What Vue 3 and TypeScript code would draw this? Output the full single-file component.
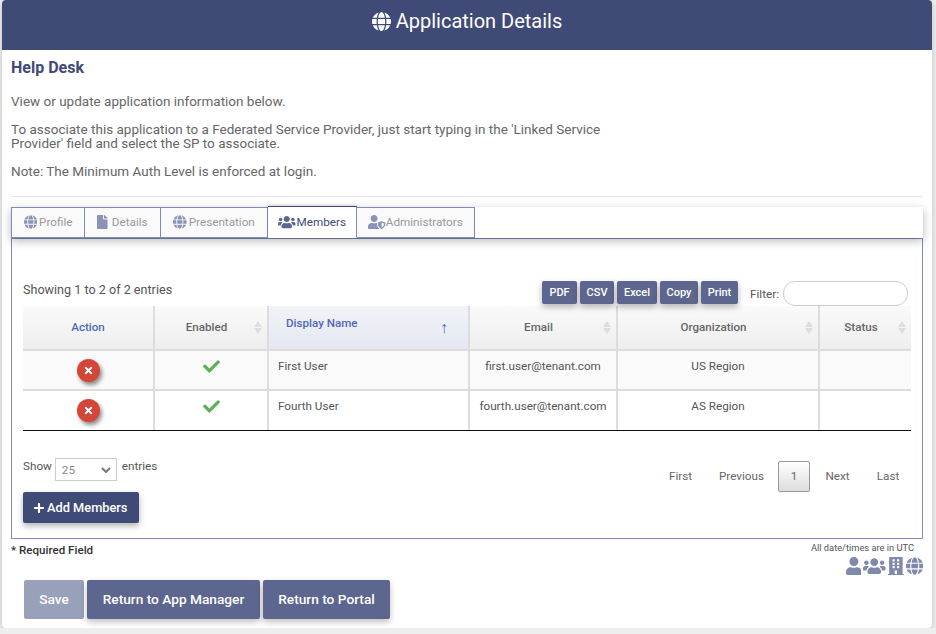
<script setup lang="ts">
interface Glyph {
  box: string
  d: string
}

const icons: Record<string, Glyph> = {
  globe: { box: '0 0 496 512', d: 'M336.5 160C322 70.7 287.8 8 248 8s-74 62.7-88.5 152h177zM152 256c0 22.2 1.2 43.5 3.3 64h185.3c2.1-20.5 3.3-41.8 3.3-64s-1.2-43.5-3.3-64H155.3c-2.1 20.5-3.3 41.8-3.3 64zm324.7-96c-28.6-67.9-86.5-120.4-158-141.6 24.4 33.8 41.2 84.7 50 141.6h108zM177.2 18.4C105.8 39.6 47.8 92.1 19.3 160h108c8.7-56.9 25.5-107.8 49.9-141.6zM487.4 192H372.7c2.1 21 3.3 42.5 3.3 64s-1.2 43-3.3 64h114.6c5.5-20.5 8.6-41.8 8.6-64s-3.1-43.5-8.5-64zM120 256c0-21.5 1.2-43 3.3-64H8.6C3.2 212.5 0 233.8 0 256s3.2 43.5 8.6 64h114.6c-2-21-3.2-42.5-3.2-64zm39.5 96c14.5 89.3 48.7 152 88.5 152s74-62.7 88.5-152h-177zm159.3 141.6c71.4-21.2 129.4-73.7 158-141.6h-108c-8.8 56.9-25.6 107.8-50 141.6zM19.3 352c28.6 67.9 86.5 120.4 158 141.6-24.4-33.8-41.2-84.7-50-141.6h-108z' },
  users: { box: '0 0 640 512', d: 'M96 224c35.3 0 64-28.7 64-64s-28.7-64-64-64-64 28.7-64 64 28.7 64 64 64zm448 0c35.3 0 64-28.7 64-64s-28.7-64-64-64-64 28.7-64 64 28.7 64 64 64zm32 32h-64c-17.6 0-33.5 7.1-45.1 18.6 40.3 22.1 68.9 62 75.1 109.4h66c17.7 0 32-14.3 32-32v-32c0-35.3-28.7-64-64-64zm-256 0c61.9 0 112-50.1 112-112S381.9 32 320 32 208 82.1 208 144s50.1 112 112 112zm76.8 32h-8.3c-20.8 10-43.9 16-68.5 16s-47.6-6-68.5-16h-8.3C179.6 288 128 339.6 128 403.2V432c0 26.5 21.5 48 48 48h288c26.5 0 48-21.5 48-48v-28.8c0-63.6-51.6-115.2-115.2-115.2zm-223.7-13.4C161.5 263.1 145.6 256 128 256H64c-35.3 0-64 28.7-64 64v32c0 17.7 14.3 32 32 32h65.9c6.3-47.4 34.9-87.3 75.2-109.4z' },
  user: { box: '0 0 448 512', d: 'M224 256c70.7 0 128-57.3 128-128S294.7 0 224 0 96 57.3 96 128s57.3 128 128 128zm89.6 32h-16.7c-22.2 10.2-46.9 16-72.9 16s-50.6-5.8-72.9-16h-16.7C60.2 288 0 348.2 0 422.4V464c0 26.5 21.5 48 48 48h352c26.5 0 48-21.5 48-48v-41.6c0-74.2-60.2-134.4-134.4-134.4z' },
  userShield: { box: '0 0 640 512', d: 'M622.3 271.1l-115.2-45c-4.1-1.6-12.6-3.7-22.2 0l-115.2 45c-10.7 4.2-17.7 14-17.7 24.9 0 111.6 68.7 188.8 132.9 213.9 9.6 3.7 18 1.6 22.2 0C558.4 489.9 640 420.5 640 296c0-10.9-7-20.7-17.7-24.9zM496 462.4V273.3l95.5 37.3c-5.6 87.1-60.9 135.4-95.5 151.8zM224 256c70.7 0 128-57.3 128-128S294.7 0 224 0 96 57.3 96 128s57.3 128 128 128zm96 40c0-2.5.8-4.7 1.1-7.2-2.5-.1-4.9-.8-7.5-.8h-16.7c-22.2 10.2-46.9 16-72.9 16s-50.6-5.8-72.9-16h-16.7C60.2 288 0 348.2 0 422.4V464c0 26.5 21.5 48 48 48h352c6.8 0 13.3-1.5 19.2-4-54-42.9-99.2-116.7-99.2-212z' },
  file: { box: '0 0 384 512', d: 'M224 136V0H24C10.7 0 0 10.7 0 24v464c0 13.3 10.7 24 24 24h336c13.3 0 24-10.7 24-24V160H248c-13.2 0-24-10.8-24-24zm160-14.1v6.1H256V0h6.1c6.4 0 12.5 2.5 17 7l97.9 98c4.5 4.5 7 10.6 7 16.9z' },
  building: { box: '0 0 448 512', d: 'M436 480h-20V24c0-13.3-10.7-24-24-24H56C42.7 0 32 10.7 32 24v456H12c-6.6 0-12 5.4-12 12v20h448v-20c0-6.6-5.4-12-12-12zM128 76c0-6.6 5.4-12 12-12h40c6.6 0 12 5.4 12 12v40c0 6.6-5.4 12-12 12h-40c-6.6 0-12-5.4-12-12V76zm0 96c0-6.6 5.4-12 12-12h40c6.6 0 12 5.4 12 12v40c0 6.6-5.4 12-12 12h-40c-6.6 0-12-5.4-12-12v-40zm52 148h-40c-6.6 0-12-5.4-12-12v-40c0-6.6 5.4-12 12-12h40c6.6 0 12 5.4 12 12v40c0 6.6-5.4 12-12 12zm76 160h-64v-84c0-6.6 5.4-12 12-12h40c6.6 0 12 5.4 12 12v84zm64-172c0 6.6-5.4 12-12 12h-40c-6.6 0-12-5.4-12-12v-40c0-6.6 5.4-12 12-12h40c6.6 0 12 5.4 12 12v40zm0-96c0 6.6-5.4 12-12 12h-40c-6.6 0-12-5.4-12-12v-40c0-6.6 5.4-12 12-12h40c6.6 0 12 5.4 12 12v40zm0-96c0 6.6-5.4 12-12 12h-40c-6.6 0-12-5.4-12-12V76c0-6.6 5.4-12 12-12h40c6.6 0 12 5.4 12 12v40z' },
  check: { box: '0 0 512 512', d: 'M173.898 439.404l-166.4-166.4c-9.997-9.997-9.997-26.206 0-36.204l36.203-36.204c9.997-9.998 26.207-9.998 36.204 0L192 312.69 432.095 72.596c9.997-9.997 26.207-9.997 36.204 0l36.203 36.204c9.997 9.997 9.997 26.206 0 36.204l-294.4 294.401c-9.998 9.997-26.207 9.997-36.204-.001z' },
  times: { box: '0 0 352 512', d: 'M242.72 256l100.07-100.07c12.28-12.28 12.28-32.19 0-44.48l-22.24-22.24c-12.28-12.28-32.19-12.28-44.48 0L176 189.28 75.93 89.21c-12.28-12.28-32.19-12.28-44.48 0L9.21 111.45c-12.28 12.28-12.28 32.19 0 44.48L109.28 256 9.21 356.07c-12.28 12.28-12.28 32.19 0 44.48l22.24 22.24c12.28 12.28 32.2 12.28 44.48 0L176 322.72l100.07 100.07c12.28 12.28 32.2 12.28 44.48 0l22.24-22.24c12.28-12.28 12.28-32.19 0-44.48L242.72 256z' },
  plus: { box: '0 0 448 512', d: 'M416 208H272V64c0-17.67-14.33-32-32-32h-32c-17.67 0-32 14.33-32 32v144H32c-17.67 0-32 14.33-32 32v32c0 17.67 14.33 32 32 32h144v144c0 17.67 14.33 32 32 32h32c17.67 0 32-14.33 32-32V304h144c17.67 0 32-14.33 32-32v-32c0-17.67-14.33-32-32-32z' }
}

const tabs = [
  { label: 'Profile', icon: 'globe', width: 74, gap: 2 },
  { label: 'Details', icon: 'file', width: 76, gap: 4 },
  { label: 'Presentation', icon: 'globe', width: 107, gap: 2 },
  { label: 'Members', icon: 'users', width: 89, gap: 1, active: true },
  { label: 'Administrators', icon: 'userShield', width: 118, gap: 0 }
]

const exportButtons = [
  { label: 'PDF', width: 35 },
  { label: 'CSV', width: 34 },
  { label: 'Excel', width: 40 },
  { label: 'Copy', width: 38 },
  { label: 'Print', width: 37 }
]

const columns = [
  { label: 'Action', width: 132, kind: 'plain' },
  { label: 'Enabled', width: 114, kind: 'sort' },
  { label: 'Display Name', width: 201, kind: 'sorted' },
  { label: 'Email', width: 148, kind: 'sort' },
  { label: 'Organization', width: 202, kind: 'sort' },
  { label: 'Status', width: 91, kind: 'sort' }
]

const members = [
  { name: 'First User', email: 'first.user@tenant.com', org: 'US Region' },
  { name: 'Fourth User', email: 'fourth.user@tenant.com', org: 'AS Region' }
]

const footerIcons = ['user', 'users', 'building', 'globe']
</script>

<template>
  <main class="card">
    <header class="card__header">
      <svg class="card__header-icon" :viewBox="icons.globe.box"><path :d="icons.globe.d" /></svg>
      <h1>Application Details</h1>
    </header>

    <div class="card__body">
      <h2>Help Desk</h2>
      <p class="intro intro--first">View or update application information below.</p>
      <p class="intro">
        To associate this application to a Federated Service Provider, just start typing in the 'Linked Service Provider' field and select the SP to associate.
      </p>
      <p class="intro">Note: The Minimum Auth Level is enforced at login.</p>
      <hr />

      <nav class="tabs">
        <a
          v-for="tab in tabs"
          :key="tab.label"
          class="tab"
          :class="{ 'tab--active': tab.active }"
          :style="{ width: tab.width + 'px', gap: tab.gap + 'px' }"
        >
          <svg :viewBox="icons[tab.icon].box"><path :d="icons[tab.icon].d" /></svg>
          {{ tab.label }}
        </a>
      </nav>

      <section class="panel">
        <div class="toolbar">
          <span class="toolbar__info">Showing 1 to 2 of 2 entries</span>
          <div class="toolbar__buttons">
            <button v-for="btn in exportButtons" :key="btn.label" type="button" :style="{ width: btn.width + 'px' }">
              {{ btn.label }}
            </button>
          </div>
          <label class="toolbar__filter">Filter:<input type="text" /></label>
        </div>

        <table class="grid">
          <colgroup>
            <col v-for="col in columns" :key="col.label" :style="{ width: col.width + 'px' }" />
          </colgroup>
          <thead>
            <tr>
              <th
                v-for="col in columns"
                :key="col.label"
                :class="{ 'th--plain': col.kind === 'plain', 'th--sorted': col.kind === 'sorted', 'th--sort': col.kind === 'sort' }"
              >
                {{ col.label }}
                <span v-if="col.kind === 'sorted'" class="sort-arrow">↑</span>
                <span v-if="col.kind === 'sort'" class="sort-both"><i></i><i></i></span>
              </th>
            </tr>
          </thead>
          <tbody>
            <tr v-for="member in members" :key="member.email">
              <td class="cell--center">
                <span class="remove"><svg :viewBox="icons.times.box"><path :d="icons.times.d" /></svg></span>
              </td>
              <td class="cell--center">
                <svg class="tick" :viewBox="icons.check.box"><path :d="icons.check.d" /></svg>
              </td>
              <td>{{ member.name }}</td>
              <td class="cell--center">{{ member.email }}</td>
              <td class="cell--center">{{ member.org }}</td>
              <td></td>
            </tr>
          </tbody>
        </table>

        <div class="below">
          <div class="below__left">
            <div class="length">
              Show
              <span class="length__select">
                25
                <svg viewBox="0 0 10 6"><path d="M1 1l4 4 4-4" /></svg>
              </span>
              entries
            </div>
            <button type="button" class="add-btn">
              <svg :viewBox="icons.plus.box"><path :d="icons.plus.d" /></svg>
              Add Members
            </button>
          </div>
          <div class="pager">
            <a style="width: 49px">First</a>
            <a style="width: 73px">Previous</a>
            <a class="pager__current">1</a>
            <a style="width: 55px">Next</a>
            <a style="width: 46px">Last</a>
          </div>
        </div>
      </section>

      <div class="notes">
        <strong>* Required Field</strong>
        <div class="notes__right">
          <span>All date/times are in UTC</span>
          <div class="notes__icons">
            <svg v-for="name in footerIcons" :key="name" :viewBox="icons[name].box"><path :d="icons[name].d" /></svg>
          </div>
        </div>
      </div>

      <div class="actions">
        <button type="button" class="action action--disabled">Save</button>
        <button type="button" class="action action--manager">Return to App Manager</button>
        <button type="button" class="action action--portal">Return to Portal</button>
      </div>
    </div>
  </main>
</template>

<style scoped>
.card {
  width: 930px;
  height: 628px;
  margin-left: 2px;
  background: #fff;
  border-radius: 4px;
  box-shadow: 0 2px 6px rgba(0, 0, 0, 0.2);
  font-family: Roboto, "Liberation Sans", sans-serif;
  overflow: hidden;
  color: #666;
}

.card__header {
  height: 50px;
  display: flex;
  align-items: center;
  justify-content: center;
  gap: 5px;
  background: #404a77;
  color: #fff;
}

.card__header h1 {
  margin: 0 0 8px;
  font-size: 20px;
  font-weight: 400;
}

.card__header-icon {
  width: 19px;
  height: 21px;
  margin-bottom: 8px;
  fill: #fff;
}

.card__body {
  padding: 9px 9px 0;
}

h2 {
  margin: 0;
  font-size: 16px;
  line-height: 18px;
  font-weight: 700;
  color: #404a77;
}

.intro {
  width: 600px;
  margin: 14px 0 0;
  font-size: 13.5px;
  line-height: 14px;
}

.intro--first {
  margin-top: 17px;
}

hr {
  margin: 18px 0 0;
  border: 0;
  border-top: 1px solid #e8e8e8;
}

.tabs {
  display: flex;
  height: 31px;
  margin-top: 10px;
  box-shadow: 0 3px 10px rgba(0, 0, 0, 0.28);
  background: #fff;
  position: relative;
}

.tab {
  display: flex;
  align-items: center;
  justify-content: center;
  height: 31px;
  box-sizing: border-box;
  padding-bottom: 1px;
  background: #fafafa;
  border: 1px solid #7f8bb2;
  border-left-width: 0;
  font-size: 11.7px;
  color: #999;
}

.tab:first-child {
  border-left-width: 1px;
}

.tab svg {
  height: 14px;
  width: auto;
  fill: #8a93b5;
}

.tab--active {
  height: 32px;
  margin-top: -1px;
  background: #fff;
  border-top: 1px solid #404a77;
  border-bottom-color: #fff;
  color: #404a77;
  box-shadow: 0 -1px 2px rgba(0, 0, 0, 0.15);
}

.tab--active svg {
  fill: #5c668f;
}

.panel {
  height: 301px;
  box-sizing: border-box;
  padding: 42px 11px 0;
  border: 1px solid #7f8bb2;
  font-size: 11.7px;
}

.toolbar {
  display: flex;
  align-items: flex-start;
  height: 25px;
  color: #555;
}

.toolbar__info {
  flex: 1;
  font-size: 12.6px;
  line-height: 18px;
}

.toolbar__buttons {
  display: flex;
  gap: 3px;
  position: relative;
  z-index: 1;
}

.toolbar__buttons button {
  height: 23px;
  padding: 0;
  border: 0;
  border-radius: 2px;
  background: #5c668f;
  color: #fff;
  font: 500 11px Roboto, sans-serif;
  box-shadow: 0 3px 6px rgba(0, 0, 0, 0.3);
}

.toolbar__filter {
  display: flex;
  align-items: flex-start;
  margin: 0 3px 0 12px;
  line-height: 26px;
}

.toolbar__filter input {
  box-sizing: border-box;
  width: 125px;
  height: 25px;
  margin-left: 4px;
  border: 1px solid #ccc;
  border-radius: 12px;
  background: #fff;
}

.grid {
  width: 888px;
  table-layout: fixed;
  border-collapse: separate;
  border-spacing: 0;
  border-bottom: 1px solid #111;
  color: #555;
}

.grid th {
  position: relative;
  height: 45px;
  box-sizing: border-box;
  padding: 0 9px 2px 0;
  border-right: 2px solid #ddd;
  border-bottom: 2px solid #ddd;
  background: linear-gradient(#fafafa, #eee);
  font-size: 11.6px;
  font-weight: 500;
  text-align: center;
  color: #666;
}

.grid th:last-child,
.grid td:last-child {
  border-right: 0;
}

.grid .th--plain {
  padding-right: 0;
  color: #5168b8;
}

.grid .th--sorted {
  padding: 0 0 9px 17px;
  background: linear-gradient(#f1f3f8, #e5e8f1);
  color: #5168b8;
  text-align: left;
}

.sort-arrow {
  position: absolute;
  right: 20px;
  top: 12px;
  font-size: 16px;
  font-weight: 300;
  color: #5168b8;
}

.sort-both {
  position: absolute;
  right: 5px;
  top: 15px;
  display: flex;
  flex-direction: column;
  gap: 1px;
}

.sort-both i {
  width: 0;
  height: 0;
  border-left: 4px solid transparent;
  border-right: 4px solid transparent;
  border-bottom: 6px solid #ddd;
}

.sort-both i:last-child {
  border-bottom: 0;
  border-top: 6px solid #ddd;
}

.grid td {
  height: 40px;
  box-sizing: border-box;
  padding: 8px 0 0 9px;
  border-right: 2px solid #ddd;
  border-bottom: 2px solid #ddd;
  background: #fff;
  font-size: 11.7px;
  line-height: 14px;
  vertical-align: top;
}

.grid tbody tr:first-child td {
  background: #fafafa;
}

.grid tbody tr:last-child td {
  height: 39px;
  border-bottom: 0;
}

.grid .cell--center {
  padding-left: 0;
  text-align: center;
}

.remove {
  display: inline-flex;
  align-items: center;
  justify-content: center;
  width: 23px;
  height: 23px;
  border-radius: 50%;
  background: #d44638;
  box-shadow: 2px 3px 4px rgba(0, 0, 0, 0.45);
}

.remove svg {
  width: 9px;
  height: 11px;
  fill: #fff;
}

.tick {
  display: block;
  width: 17px;
  height: 17px;
  margin: -1px auto 0;
  fill: #5cb25c;
}

.below {
  display: flex;
  justify-content: space-between;
}

.below__left {
  padding-top: 27px;
}

.length {
  display: flex;
  align-items: flex-start;
  line-height: 16px;
  color: #555;
}

.length__select {
  display: flex;
  align-items: center;
  justify-content: space-between;
  box-sizing: border-box;
  width: 62px;
  height: 23px;
  margin: 0 5px 0 3px;
  padding: 0 5px 0 6px;
  border: 1px solid #ccc;
  color: #888;
}

.length__select svg {
  width: 10px;
  height: 6px;
  fill: none;
  stroke: #777;
  stroke-width: 2;
}

.add-btn {
  display: flex;
  align-items: center;
  gap: 3px;
  width: 116px;
  height: 31px;
  margin-top: 11px;
  padding: 0 0 0 11px;
  border: 0;
  border-radius: 2px;
  background: #404a77;
  color: #fff;
  font: 500 12.8px Roboto, sans-serif;
  box-shadow: 0 3px 6px rgba(0, 0, 0, 0.3);
}

.add-btn svg {
  width: 10px;
  height: 12px;
  fill: #fff;
}

.pager {
  display: flex;
  align-items: center;
  height: 30px;
  margin: 30px 0 0;
  color: #666;
}

.pager a {
  text-align: center;
}

.pager .pager__current {
  box-sizing: border-box;
  width: 32px;
  height: 31px;
  line-height: 29px;
  border: 1px solid #999;
  border-radius: 2px;
  background: linear-gradient(#fff, #ddd);
}

.notes {
  display: flex;
  justify-content: space-between;
  height: 41px;
}

.notes strong {
  margin-top: 4px;
  font-size: 11.6px;
  font-weight: 500;
  color: #333;
}

.notes__right {
  display: flex;
  flex-direction: column;
  align-items: flex-end;
  font-size: 9.3px;
  color: #555;
}

.notes__right span {
  margin: 4px 9px 0 0;
  line-height: 10px;
}

.notes__icons {
  display: flex;
  gap: 2px;
  margin-top: 4px;
}

.notes__icons svg {
  height: 18px;
  width: auto;
  fill: #8088ac;
}

.actions {
  display: flex;
  gap: 3px;
  padding-left: 13px;
}

.action {
  width: 60px;
  height: 39px;
  padding: 0 0 2px;
  border: 0;
  border-radius: 2px;
  background: #5c668f;
  color: #fff;
  font: 500 13.7px Roboto, sans-serif;
  box-shadow: 0 3px 6px rgba(0, 0, 0, 0.25);
}

.action--manager {
  width: 173px;
}

.action--portal {
  width: 127px;
}

.action--disabled {
  background: #98a0ba;
  box-shadow: none;
}
</style>

<style>
html,
body {
  margin: 0;
  background: #eee;
  overflow: hidden;
}
</style>
